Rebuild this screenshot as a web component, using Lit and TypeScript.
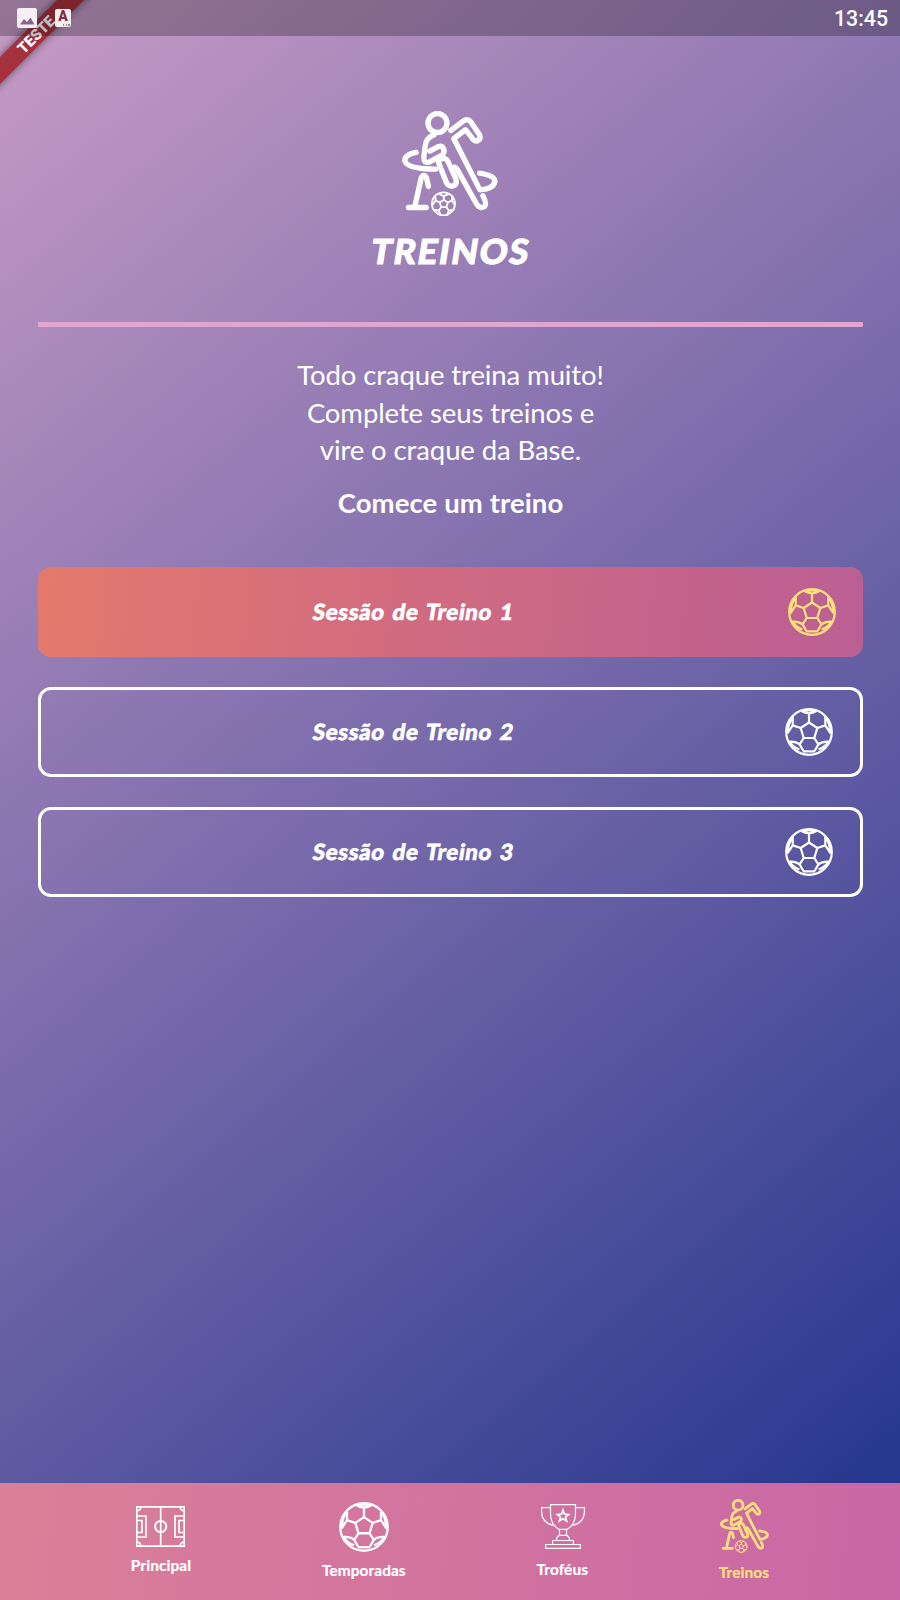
import { LitElement, html, css, svg } from "lit";
import { customElement, property } from "lit/decorators.js";

const ballShape = svg`
  <circle cx="24" cy="24" r="22.8"></circle>
  <path d="M24 14.5 32.3 20 29.3 30H18.7L15.7 20Z"></path>
  <path d="M24 14.5V5.2M16.5 3Q24 7.6 31.5 3M16.5 3.2Q24 1.6 31.5 3.2"></path>
  <path d="M32.3 20 40.3 17.4M40.3 9V17.4L45.6 25.5M40.3 9Q44.5 14 45.6 25"></path>
  <path d="M15.7 20 7.7 17.4M7.7 9V17.4L2.4 25.5M7.7 9Q3.5 14 2.4 25"></path>
  <path d="M29.3 30 33.4 36.4 29.6 43M33.4 36.4Q37 33.2 43.6 33.6Q40.5 39 33.6 41.5"></path>
  <path d="M18.7 30 14.6 36.4 18.4 43M14.6 36.4Q11 33.2 4.4 33.6Q7.5 39 14.4 41.5"></path>
  <path d="M18 43.4H30"></path>`;

@customElement("ball-icon")
export class BallIcon extends LitElement {
  static styles = css`
    :host { display: block; }
    svg { display: block; width: 100%; height: 100%; fill: none; stroke: currentColor; stroke-width: 2.2; stroke-linejoin: round; }
  `;
  render() {
    return html`<svg viewBox="0 0 48 48">${ballShape}</svg>`;
  }
}

@customElement("player-icon")
export class PlayerIcon extends LitElement {
  static styles = css`
    :host { display: block; }
    svg { display: block; width: 100%; height: 100%; fill: none; stroke: currentColor; stroke-width: 16; stroke-linecap: round; stroke-linejoin: round; }
    .ball { stroke-width: 5.5; }
  `;
  render() {
    return html`<svg viewBox="38 32 287 316">
      <circle cx="144" cy="68" r="28.5"></circle>
      <path d="M134 103Q109 113 107 137L103 170Q102 189 119 185L158 164Q166 157 163 146Q157 134 146 139L121 152"></path>
      <path d="M80 156Q46 162 46 181Q53 206 139 206"></path>
      <path d="M147 186Q150 173 163 174Q172 175 176 184L200 238Q203 254 188 257Q177 258 171 247Z"></path>
      <path d="M184 90 221 62Q234 53 244 65L270 103Q275 117 263 122Q253 123 247 112L228 88 193 115 270 266"></path>
      <path d="M270 218Q316 225 316 243Q312 265 272 268"></path>
      <path d="M196 200Q203 203 206 212L262 312Q272 326 285 318Q293 311 280 286"></path>
      <path d="M57 321H110M76 319 95 233Q103 218 111 232L117 258"></path>
      <g class="ball">
        <circle cx="162" cy="310" r="34.5"></circle>
        <path d="M163 298 175 306 171 320H155L151 306ZM163 298V287M175 306 187 300M171 320 178 330M155 320 148 330M151 306 139 300M148 280 163 287 178 280M189 288 187 300 195 312M137 288 139 300 130 312M192 328 178 330 173 343M134 328 148 330 153 343"></path>
      </g>
    </svg>`;
  }
}

@customElement("pitch-icon")
export class PitchIcon extends LitElement {
  static styles = css`
    :host { display: block; }
    svg { display: block; width: 100%; height: 100%; fill: none; stroke: currentColor; stroke-width: 1.7; }
  `;
  render() {
    return html`<svg viewBox="0 0 49 41">
      <path d="M.8.8H48.2V40.2H.8ZM24.7.8V40.2"></path>
      <circle cx="24.7" cy="20.5" r="5.6" stroke-width="2"></circle>
      <path d="M.8 10H10V31H.8M.8 14.5H6V26.5H.8M48.2 10H39V31H48.2M48.2 14.5H43V26.5H48.2"></path>
      <path d="M4.8.8Q4.6 4.8.8 4.8M44.2.8Q44.4 4.8 48.2 4.8M4.8 40.2Q4.6 36.2.8 36.2M44.2 40.2Q44.4 36.2 48.2 36.2"></path>
    </svg>`;
  }
}

@customElement("trophy-icon")
export class TrophyIcon extends LitElement {
  static styles = css`
    :host { display: block; }
    svg { display: block; width: 100%; height: 100%; fill: none; stroke: currentColor; stroke-width: 1.2; }
  `;
  render() {
    return html`<svg viewBox="0 0 44 45">
      <path d="M9.5.6H34.5V10Q34 21 26 25.4H18Q10 21 9.5 10Z"></path>
      <path d="M9.5 3.6H.6V8Q1 19 12.6 21.4M34.5 3.6H43.4V8Q43 19 31.4 21.4"></path>
      <path d="M18.5 25.4V31.4H25.5V25.4M18.5 31.4Q15.5 32.5 15.4 36.4M25.5 31.4Q28.5 32.5 28.6 36.4M11.6 40.4V36.5H32.4V40.4M4.6 40.5H39.4V44.4H4.6Z"></path>
      <path stroke-width="1.7" d="M22 6 23.5 10.2 27.6 10.6 24.5 13.2 25.6 17 22 14.8 18.4 17 19.5 13.2 16.4 10.6 20.5 10.2Z"></path>
    </svg>`;
  }
}

@customElement("session-button")
export class SessionButton extends LitElement {
  @property() label = "";
  @property({ type: Boolean, reflect: true }) active = false;
  static styles = css`
    :host { display: flex; align-items: center; box-sizing: border-box; height: 90px; padding-right: 27px; border: 3px solid #fff; border-radius: 13px; color: #fff; }
    :host([active]) { border: 0; background: linear-gradient(96deg, #e4796d 0%, #d16b80 45%, #bb5f94 100%); }
    .label { flex: 1; padding: 1px 0 0 1px; text-align: center; font: 900 22.3px/30px Lato, sans-serif; letter-spacing: 0.6px; word-spacing: 2px; transform: skewX(-9deg); -webkit-text-stroke: 0.6px currentColor; }
    .ball { width: 48px; height: 48px; }
    :host([active]) .ball { color: #ffe07c; }
  `;
  render() {
    return html`<span class="label">${this.label}</span><ball-icon class="ball"></ball-icon>`;
  }
}

@customElement("app-root")
export class AppRoot extends LitElement {
  static styles = css`
    :host { display: flex; flex-direction: column; position: relative; width: 900px; height: 1600px; overflow: hidden; color: #fff; font-family: Lato, sans-serif; }
    .body { flex: 1; display: flex; flex-direction: column; box-sizing: border-box; padding: 36px 37px 0 38px; background: linear-gradient(140deg, #c79bc5 0%, #7065a8 55%, #26378f 100%); }
    .ribbon { position: absolute; left: -64.5px; top: 25px; width: 200px; height: 19px; transform: rotate(-45deg); background: #a4313c; box-shadow: 0 0 9px rgba(0, 0, 0, 0.5); text-align: center; font: 900 15.3px/20px Roboto, sans-serif; }
    .status { position: absolute; left: 0; top: 0; width: 900px; height: 36px; box-sizing: border-box; padding: 0 12px 0 17px; display: flex; align-items: center; background: rgba(0, 0, 0, 0.25); }
    .pic { width: 20px; height: 20px; }
    .lang { display: flex; flex-direction: column; align-items: center; width: 16px; height: 18px; margin-left: 18px; border-radius: 2px; background: #f6eff2; color: #84303f; font: 900 14px/15px Roboto, sans-serif; }
    .dots { width: 7px; height: 1.5px; margin-left: 6px; background: repeating-linear-gradient(90deg, #a08595 0 1.5px, transparent 1.5px 2.7px); }
    .time { margin-left: auto; padding-top: 2px; font: 500 21.3px/36px Roboto, sans-serif; }
    .hero { width: 96px; height: 105.5px; margin: 74.5px 0 0 364.2px; }
    h1 { margin: 12.5px 0 0; text-align: center; font: 900 34.5px/44px Lato, sans-serif; letter-spacing: 1.7px; text-indent: 1px; transform: skewX(-9deg); -webkit-text-stroke: 1px currentColor; }
    .rule { height: 5px; margin-top: 49.5px; background: #e0a6cf; }
    .intro { margin-top: 29px; text-align: center; font-size: 27.5px; line-height: 37.5px; letter-spacing: -0.1px; }
    .start { margin-top: 16px; text-align: center; font-weight: 700; font-size: 27.5px; line-height: 36px; letter-spacing: 0.1px; }
    .sessions { display: grid; gap: 30px; margin-top: 46px; }
    nav { height: 117px; display: flex; justify-content: space-evenly; align-items: center; background: linear-gradient(97deg, #da8098, #c967a6); }
    .item { display: flex; flex-direction: column; align-items: center; padding-bottom: 2px; font-size: 15.4px; font-weight: 700; line-height: 20px; letter-spacing: 0.1px; -webkit-text-stroke: 0.2px currentColor; }
    .item:first-child { padding-bottom: 3px; }
    .item.on { color: #ffe07c; }
    .pitch { width: 49px; height: 41px; margin-bottom: 8px; }
    .ball { width: 50px; height: 50px; margin-bottom: 8px; }
    .trophy { width: 44px; height: 45px; margin: 1px 0 10px 1px; }
    .player { width: 49px; height: 54px; margin-bottom: 9px; }
  `;
  render() {
    return html`
      <div class="body">
        <player-icon class="hero"></player-icon>
        <h1>TREINOS</h1>
        <div class="rule"></div>
        <div class="intro">
          <div>Todo craque treina muito!</div>
          <div>Complete seus treinos e</div>
          <div>vire o craque da Base.</div>
        </div>
        <div class="start">Comece um treino</div>
        <div class="sessions">
          ${[1, 2, 3].map((n) => html`<session-button label=${`Sessão de Treino ${n}`} ?active=${n === 1}></session-button>`)}
        </div>
      </div>
      <nav>
        <div class="item"><pitch-icon class="pitch"></pitch-icon><span>Principal</span></div>
        <div class="item"><ball-icon class="ball"></ball-icon><span>Temporadas</span></div>
        <div class="item"><trophy-icon class="trophy"></trophy-icon><span>Troféus</span></div>
        <div class="item on"><player-icon class="player"></player-icon><span>Treinos</span></div>
      </nav>
      <div class="ribbon">TESTE</div>
      <div class="status">
        <svg class="pic" viewBox="0 0 20 20"><rect width="20" height="20" rx="2" fill="#f6f0f5"></rect><path d="M3 16.5 7 11 10 14 13.5 9.5 17.5 16.5Z" fill="#86688a"></path></svg>
        <div class="lang">A<span class="dots"></span></div>
        <span class="time">13:45</span>
      </div>`;
  }
}
